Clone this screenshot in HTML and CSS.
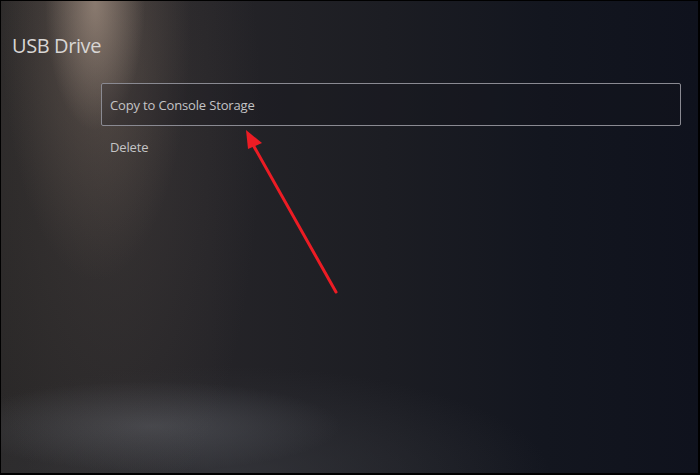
FILE: index.html
```html
<!DOCTYPE html>
<html lang="en">
<head>
    <meta charset="UTF-8">
    <meta name="viewport" content="width=device-width, initial-scale=1.0">
    <title>USB Drive</title>
    <link rel="stylesheet" href="styles.css">
</head>
<body>
    <div class="screen">
        <h1 class="title">USB Drive</h1>
        <ul class="menu">
            <li class="menu-item selected">Copy to Console Storage</li>
            <li class="menu-item">Delete</li>
        </ul>

        <!-- annotation arrow -->
        <svg class="arrow" width="700" height="475" viewBox="0 0 700 475">
            <line x1="336" y1="292" x2="252" y2="143" stroke="#ec1c24" stroke-width="3" stroke-linecap="round"/>
            <polygon points="246,130 262,143 248,149" fill="#ec1c24"/>
        </svg>
    </div>
</body>
</html>
```

FILE: styles.css
```css
body {
    margin: 0;
    padding: 0;
    background-color: #000;
    font-family: "Open Sans", "Noto Sans", Arial, sans-serif;
}
.screen {
    position: relative;
    width: 700px;
    height: 475px;
    box-sizing: border-box;
    border: 1px solid #000;
    border-width: 1px 2px 2px 1px;
    overflow: hidden;
    padding: 31px 0 0 11px;
    background:
        radial-gradient(ellipse 50px 130px at 94px 0, rgba(175, 155, 140, 0.6), rgba(175, 155, 140, 0) 100%),
        radial-gradient(ellipse 95px 260px at 95px 20px, rgba(125, 108, 96, 0.45), rgba(125, 108, 96, 0) 100%),
        radial-gradient(ellipse 150px 420px at 110px 120px, rgba(95, 84, 78, 0.3), rgba(95, 84, 78, 0) 100%),
        radial-gradient(ellipse 190px 45px at 150px 425px, rgba(100, 103, 110, 0.45), rgba(100, 103, 110, 0) 100%),
        radial-gradient(ellipse 330px 110px at 220px 475px, rgba(62, 64, 70, 0.55), rgba(62, 64, 70, 0) 100%),
        linear-gradient(to right, #2a2828 0%, #252428 30%, #1c1d23 55%, #13161f 78%, #0f121d 100%);
}
.title {
    margin: 0;
    font-size: 20px;
    font-weight: 400;
    color: #d8d6d4;
    line-height: 28px;
    letter-spacing: -0.4px;
}
.menu {
    list-style: none;
    margin: 23px 0 0 89px;
    padding: 0;
    width: 580px;
}
.menu-item {
    height: 42px;
    box-sizing: border-box;
    display: flex;
    align-items: center;
    padding: 0 8px;
    border: 1px solid transparent;
    font-size: 13px;
    color: #c4c4c6;
    letter-spacing: -0.15px;
}
.menu-item.selected {
    height: 43px;
    border-color: #8a8a92;
    border-radius: 2px;
    background: rgba(20, 20, 26, 0.25);
}
.arrow {
    position: absolute;
    left: -1px;
    top: -1px;
}
```
